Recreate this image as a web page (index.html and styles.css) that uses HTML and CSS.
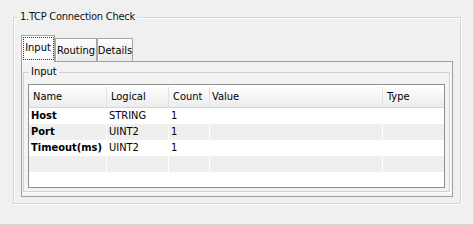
FILE: index.html
```html
<!DOCTYPE html>
<html>
<head>
<meta charset="utf-8">
<link rel="stylesheet" href="styles.css">
</head>
<body>
<div class="window">
  <fieldset class="group outer">
    <legend class="legend outer-legend">1.TCP Connection Check</legend>
    <div class="tabstrip">
      <div class="tab tab-active tab-input"><span class="focus">Input</span></div>
      <div class="tab tab-routing">Routing</div>
      <div class="tab tab-details">Details</div>
    </div>
    <div class="tabpanel">
      <fieldset class="group inner">
        <legend class="legend inner-legend">Input</legend>
        <div class="grid">
          <div class="row head">
            <div class="cell c-name">Name</div>
            <div class="cell c-logical">Logical</div>
            <div class="cell c-count">Count</div>
            <div class="cell c-value">Value</div>
            <div class="cell c-type">Type</div>
          </div>
          <div class="row">
            <div class="cell c-name bold">Host</div>
            <div class="cell c-logical">STRING</div>
            <div class="cell c-count">1</div>
            <div class="cell c-value"></div>
            <div class="cell c-type"></div>
          </div>
          <div class="row alt">
            <div class="cell c-name bold">Port</div>
            <div class="cell c-logical">UINT2</div>
            <div class="cell c-count">1</div>
            <div class="cell c-value"></div>
            <div class="cell c-type"></div>
          </div>
          <div class="row">
            <div class="cell c-name bold">Timeout(ms)</div>
            <div class="cell c-logical">UINT2</div>
            <div class="cell c-count">1</div>
            <div class="cell c-value"></div>
            <div class="cell c-type"></div>
          </div>
          <div class="row alt">
            <div class="cell c-name"></div>
            <div class="cell c-logical"></div>
            <div class="cell c-count"></div>
            <div class="cell c-value"></div>
            <div class="cell c-type"></div>
          </div>
          <div class="row last">
            <div class="cell c-name"></div>
            <div class="cell c-logical"></div>
            <div class="cell c-count"></div>
            <div class="cell c-value"></div>
            <div class="cell c-type"></div>
          </div>
        </div>
      </fieldset>
    </div>
  </fieldset>
</div>
</body>
</html>
```

FILE: styles.css
```css
* { box-sizing: border-box; }
html, body {
  margin: 0;
  padding: 0;
  background: #f0f0f0;
}
body {
  font-family: "DejaVu Sans Condensed", "Liberation Sans", sans-serif;
  font-size: 11px;
  color: #000;
}
.window {
  width: 474px;
  height: 225px;
  padding-top: 10px;
  padding-left: 13px;
  border-right: 1px solid #dcdcdc;
  border-bottom: 1px solid #d4d4d4;
  overflow: hidden;
}
.group {
  margin: 0;
  min-width: 0;
  border: 1px solid #d6d6d6;
}
.legend {
  line-height: 14px;
  height: 14px;
  padding: 0 2px;
  white-space: nowrap;
}
.outer {
  width: 448px;
  padding: 11px 7px 6px 7px;
  box-shadow: inset 1px 1px 0 #fff, 1px 1px 0 #fff;
}
.outer-legend {
  margin-left: -3px;
  letter-spacing: -0.25px;
  color: #111;
}
.tabstrip {
  display: flex;
  align-items: flex-end;
  height: 27px;
  margin-bottom: -1px;
}
.tab {
  height: 23px;
  margin-bottom: 1px;
  border: 1px solid #a7a7a7;
  border-bottom: none;
  background: linear-gradient(#fdfdfd, #e9e9e9);
  display: flex;
  align-items: center;
  justify-content: center;
  white-space: nowrap;
  box-shadow: inset 1px 1px 0 #fff;
}
.tab-input { width: 34px; }
.tab-routing { width: 42px; }
.tab-details { width: 36px; }
.tab-active {
  height: 27px;
  margin-bottom: 0;
  background: #fcfcfc;
  position: relative;
  z-index: 1;
  align-items: flex-start;
  padding-top: 1px;
}
.focus {
  display: block;
  width: 31px;
  height: 23px;
  line-height: 22px;
  text-align: center;
  outline: 1px dotted #333;
  outline-offset: -1px;
}
.tabpanel {
  width: 432px;
  height: 136px;
  border: 1px solid #a0a0a0;
  background: #f3f3f3;
  padding: 0 2px 0 1px;
}
.inner {
  margin: 3px 0 4px 0;
  width: 427px;
  padding: 5px 4px 3px 4px;
  border-color: #d2d2d2;
  box-shadow: 1px 1px 0 #fff;
}
.inner-legend {
  margin-left: 1px;
}
.grid {
  width: 417px;
  height: 104px;
  border: 1px solid #8e8f8f;
  background: #fff;
}
.row {
  display: flex;
  height: 16px;
  line-height: 16px;
}
.row.last { height: 15px; }
.row.alt { background: #efefef; }
.row.head {
  height: 23px;
  padding-top: 2px;
  line-height: 20px;
  background: linear-gradient(#ffffff, #f4f4f4 60%, #ececec);
  border-bottom: 1px solid #d5d5d5;
}
.cell {
  border-right: 1px solid #fff;
  padding-left: 2px;
  white-space: nowrap;
  overflow: hidden;
}
.head .cell {
  border-right: 1px solid #e2e2e2;
  padding-left: 4px;
}
.head .c-value { padding-left: 2px; }
.c-name { width: 78px; }
.c-logical { width: 62px; }
.c-count { width: 41px; }
.c-value { width: 173px; }
.c-type { width: 61px; border-right: none !important; }
.bold { font-weight: bold; }
```
